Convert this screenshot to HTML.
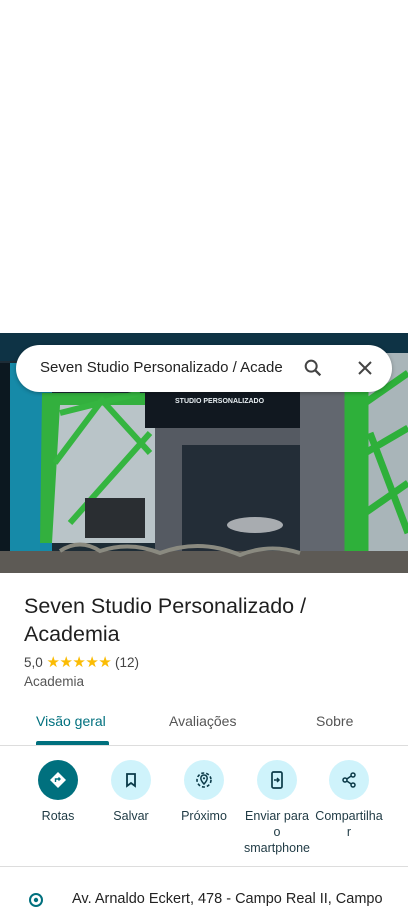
<!DOCTYPE html>
<html><head><meta charset="utf-8"><style>
*{margin:0;padding:0;box-sizing:border-box}
body{width:408px;height:906px;overflow:hidden;background:#fff;font-family:"Liberation Sans",sans-serif;position:relative;color:#1f1f1f}
.abs{position:absolute}
.photo{left:0;top:333px;width:408px;height:240px;overflow:hidden;background:#1a2a35}
.search{left:16px;top:345px;width:376px;height:47px;background:#fff;border-radius:24px;box-shadow:0 1px 4px rgba(0,0,0,.3)}
.btn{position:absolute;top:760px;width:40px;height:40px;border-radius:50%;background:#cff3fb;display:flex;align-items:center;justify-content:center}
.lbl{position:absolute;top:808px;width:80px;text-align:center;font-size:12.5px;color:#1f3a44;line-height:16px}
</style></head><body>
<div class="abs photo">
 <svg width="408" height="240" viewBox="0 0 408 240">
  <rect width="408" height="240" fill="#1d2c36"/>
  <rect x="0" y="0" width="408" height="28" fill="#0e3345"/>
  <rect x="0" y="30" width="10" height="195" fill="#0c1820"/>
  <rect x="10" y="30" width="42" height="195" fill="#168aa8"/>
  <rect x="50" y="60" width="110" height="150" fill="#b9c4c8"/>
  <path d="M42 60 L150 60 L150 72 L60 72 L52 210 L40 210 Z" fill="#33b03e"/>
  <path d="M60 80 L140 60 M55 130 L100 70 M70 190 L150 100 M100 65 L150 120" stroke="#35b540" stroke-width="6"/>
  <rect x="145" y="40" width="160" height="55" fill="#111820"/>
  <text x="175" y="70" font-size="7" fill="#e8eef2" font-family="Liberation Sans" font-weight="bold">STUDIO PERSONALIZADO</text>
  <rect x="155" y="95" width="150" height="135" fill="#555a62"/>
  <rect x="182" y="112" width="120" height="110" fill="#232d37"/>
  <rect x="300" y="50" width="48" height="190" fill="#62676f"/>
  <rect x="348" y="20" width="60" height="220" fill="#a9b5b9"/>
  <path d="M348 20 L365 20 L365 240 L348 240 Z M365 70 L408 40 M365 120 L408 95 M365 180 L408 150 M370 100 L408 200" stroke="#2eb03a" stroke-width="7" fill="#2eb03a"/>
  <ellipse cx="255" cy="192" rx="28" ry="8" fill="#a8acb0"/>
  <rect x="85" y="165" width="60" height="40" fill="#2a2e32"/>
  <rect x="0" y="218" width="408" height="22" fill="#5d5a55"/>
  <path d="M60 218 Q80 205 100 218 Q130 208 160 220 Q200 205 240 222 Q270 210 300 220" stroke="#8a8a80" stroke-width="4" fill="none"/>
 </svg>
</div>
<div class="abs search">
 <div class="abs" style="left:24px;top:14px;font-size:15px;color:#222">Seven Studio Personalizado / Acade</div>
 <svg class="abs" style="left:286px;top:12px" width="22" height="22" viewBox="0 0 24 24"><circle cx="10" cy="10" r="6" fill="none" stroke="#444" stroke-width="2.2"/><path d="M14.5 14.5 L20 20" stroke="#444" stroke-width="2.5"/></svg>
 <svg class="abs" style="left:340px;top:14px" width="18" height="18" viewBox="0 0 18 18"><path d="M3 3 L15 15 M15 3 L3 15" stroke="#444" stroke-width="2"/></svg>
</div>
<div class="abs" style="left:24px;top:592px;font-size:21.5px;line-height:28px;color:#1f1f1f">Seven Studio Personalizado /<br>Academia</div>
<div class="abs" style="left:24px;top:653px;font-size:13.5px;color:#444">5,0 <span style="color:#fbbc04;font-size:15px;letter-spacing:-0.5px">★★★★★</span> (12)</div>
<div class="abs" style="left:24px;top:674px;font-size:13.5px;color:#555">Academia</div>
<div class="abs" style="left:36px;top:713px;font-size:14px;color:#00707e">Visão geral</div>
<div class="abs" style="left:169px;top:713px;font-size:14px;color:#555">Avaliações</div>
<div class="abs" style="left:316px;top:713px;font-size:14px;color:#555">Sobre</div>
<div class="abs" style="left:36px;top:741px;width:73px;height:4px;background:#00707e;border-radius:2px 2px 0 0"></div>
<div class="abs" style="left:0;top:745px;width:408px;height:1px;background:#ddd"></div>
<div class="btn" style="left:38px;background:#00707e"><svg width="18" height="18" viewBox="0 0 18 18"><path d="M9 1 L17 9 L9 17 L1 9 Z" fill="#fff"/><path d="M6.5 11 V8 H11 M9.5 6.5 L11 8 L9.5 9.5" stroke="#00707e" stroke-width="1.4" fill="none"/></svg></div>
<div class="btn" style="left:111px"><svg width="16" height="16" viewBox="0 0 16 16"><path d="M4 2 H12 V14 L8 11 L4 14 Z" fill="none" stroke="#0b3a48" stroke-width="1.8"/></svg></div>
<div class="btn" style="left:184px"><svg width="18" height="18" viewBox="0 0 18 18"><circle cx="9" cy="9" r="7" fill="none" stroke="#0b3a48" stroke-width="1.6" stroke-dasharray="3 2"/><path d="M9 4 A3.2 3.2 0 0 1 12.2 7.2 C12.2 9.5 9 13 9 13 C9 13 5.8 9.5 5.8 7.2 A3.2 3.2 0 0 1 9 4Z" fill="none" stroke="#0b3a48" stroke-width="1.5"/><circle cx="9" cy="7.3" r="1.1" fill="#0b3a48"/></svg></div>
<div class="btn" style="left:257px"><svg width="16" height="18" viewBox="0 0 16 18"><rect x="3" y="1" width="10" height="16" rx="1.5" fill="none" stroke="#0b3a48" stroke-width="1.7"/><path d="M5 9 H10 M8 7 L10 9 L8 11" stroke="#0b3a48" stroke-width="1.5" fill="none"/></svg></div>
<div class="btn" style="left:329px"><svg width="16" height="16" viewBox="0 0 16 16"><circle cx="12" cy="3" r="2" fill="none" stroke="#0b3a48" stroke-width="1.5"/><circle cx="4" cy="8" r="2" fill="none" stroke="#0b3a48" stroke-width="1.5"/><circle cx="12" cy="13" r="2" fill="none" stroke="#0b3a48" stroke-width="1.5"/><path d="M5.8 7 L10.2 4 M5.8 9 L10.2 12" stroke="#0b3a48" stroke-width="1.5"/></svg></div>
<div class="lbl" style="left:18px">Rotas</div>
<div class="lbl" style="left:91px">Salvar</div>
<div class="lbl" style="left:164px">Próximo</div>
<div class="lbl" style="left:237px">Enviar para<br>o<br>smartphone</div>
<div class="lbl" style="left:309px;width:80px;word-break:break-all">Compartilha<br>r</div>
<div class="abs" style="left:0;top:866px;width:408px;height:1px;background:#ddd"></div>
<svg class="abs" style="left:28px;top:892px" width="16" height="16" viewBox="0 0 16 16"><circle cx="8" cy="8" r="6" fill="none" stroke="#00707e" stroke-width="2"/><circle cx="8" cy="8" r="2.2" fill="#00707e"/></svg>
<div class="abs" style="left:72px;top:891px;font-size:14.5px;color:#222;white-space:nowrap">Av. Arnaldo Eckert, 478 - Campo Real II, Campo</div>
</body></html>
